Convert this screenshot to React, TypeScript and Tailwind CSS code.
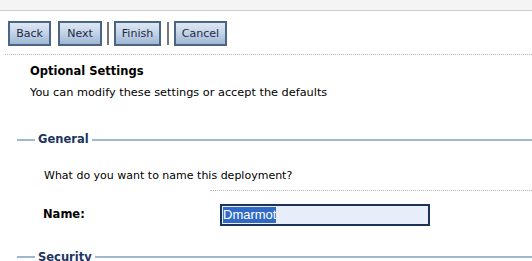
import React from "react";

const font = { fontFamily: '"DejaVu Sans", Tahoma, sans-serif' };

const Btn: React.FC<{ label: string; w: string }> = ({ label, w }) => (
  <button
    className={`h-[25px] ${w} border-2 border-[#4b6585] bg-gradient-to-b from-[#dfe8f3] via-[#c2d2e6] to-[#9fb6d3] text-[11px] text-[#1a2a44] leading-none`}
  >
    {label}
  </button>
);

const Legend: React.FC<{ title: string }> = ({ title }) => (
  <div className="flex items-center">
    <div className="ml-[17px] h-[2px] w-[18px] bg-[#9fb7d0]" />
    <span className="px-[3px] text-[11.5px] font-bold text-[#1d3461] leading-none">{title}</span>
    <div className="h-[2px] flex-1 bg-[#9fb7d0]" />
  </div>
);

export default function App() {
  return (
    <div className="w-[532px] h-[261px] overflow-hidden bg-white text-black" style={font}>
      {/* top band */}
      <div className="h-[11px] bg-[#f4f4f4] border-b border-[#cccccc]" />

      {/* toolbar */}
      <div className="flex items-center pl-[8px] pt-[10px]">
        <Btn label="Back" w="w-[43px]" />
        <div className="ml-[7px]" />
        <Btn label="Next" w="w-[44px]" />
        <div className="ml-[5px] mr-[5px] h-[23px] w-[2px] bg-[#777777]" />
        <Btn label="Finish" w="w-[47px]" />
        <div className="ml-[6px] mr-[5px] h-[23px] w-[2px] bg-[#777777]" />
        <Btn label="Cancel" w="w-[53px]" />
      </div>
      <div className="ml-[5px] mt-[8px] border-t border-dotted border-[#bbbbbb]" />

      {/* intro */}
      <div className="pl-[30px] pt-[8px]">
        <div className="text-[11.5px] font-bold leading-[16px]">Optional Settings</div>
        <div className="mt-[6px] text-[11.3px] leading-[16px]">You can modify these settings or accept the defaults</div>
      </div>

      {/* General */}
      <div className="mt-[33px]">
        <Legend title="General" />
      </div>
      <div className="pl-[44px] pt-[22px] text-[11px] leading-[16px]">What do you want to name this deployment?</div>
      <div className="ml-[210px] mt-[6px] border-t border-dotted border-[#bbbbbb]" />
      <div className="flex items-center pt-[13px]">
        <div className="w-[220px] pl-[43px] text-[11.5px] font-bold">Name:</div>
        <div className="h-[22px] w-[210px] border-2 border-[#1c3358] bg-[#e8eef9] flex items-center pl-[1px]">
          <span
            className="bg-[#316ac5] text-white text-[13px] leading-[16px]"
            style={{ fontFamily: '"Liberation Sans", Arial, sans-serif' }}
          >
            Dmarmot
          </span>
        </div>
      </div>

      {/* Security */}
      <div className="mt-[26px]">
        <Legend title="Security" />
      </div>
    </div>
  );
}
